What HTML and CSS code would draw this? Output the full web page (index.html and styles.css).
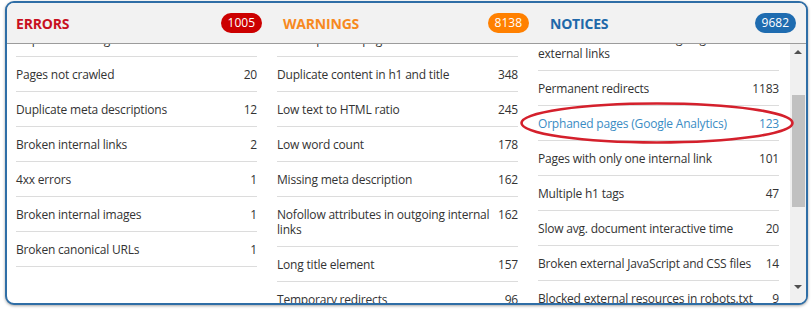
FILE: index.html
```html
<!DOCTYPE html>
<html lang="en">
<head>
<meta charset="utf-8">
<title>Site Audit issues</title>
<link rel="stylesheet" href="styles.css">
</head>
<body>
<div class="popup">
  <div class="head">
    <div class="head-sec">
      <span class="title title--err">ERRORS</span>
      <span class="badge badge--err">1005</span>
    </div>
    <div class="head-sec">
      <span class="title title--warn">WARNINGS</span>
      <span class="badge badge--warn">8138</span>
    </div>
    <div class="head-sec">
      <span class="title title--note">NOTICES</span>
      <span class="badge badge--note">9682</span>
    </div>
  </div>
  <div class="body">
    <div class="cols">
      <ul class="col col--a">
        <li class="row"><span class="lbl">Duplicate title tag</span><span class="num">64</span></li>
        <li class="row"><span class="lbl">Pages not crawled</span><span class="num">20</span></li>
        <li class="row"><span class="lbl">Duplicate meta descriptions</span><span class="num">12</span></li>
        <li class="row"><span class="lbl">Broken internal links</span><span class="num">2</span></li>
        <li class="row"><span class="lbl">4xx errors</span><span class="num">1</span></li>
        <li class="row"><span class="lbl">Broken internal images</span><span class="num">1</span></li>
        <li class="row"><span class="lbl">Broken canonical URLs</span><span class="num">1</span></li>
      </ul>
      <ul class="col col--b">
        <li class="row"><span class="lbl">Uncompressed pages</span><span class="num">512</span></li>
        <li class="row"><span class="lbl">Duplicate content in h1 and title</span><span class="num">348</span></li>
        <li class="row"><span class="lbl">Low text to HTML ratio</span><span class="num">245</span></li>
        <li class="row"><span class="lbl">Low word count</span><span class="num">178</span></li>
        <li class="row"><span class="lbl">Missing meta description</span><span class="num">162</span></li>
        <li class="row"><span class="lbl">Nofollow attributes in outgoing internal links</span><span class="num">162</span></li>
        <li class="row"><span class="lbl">Long title element</span><span class="num">157</span></li>
        <li class="row"><span class="lbl">Temporary redirects</span><span class="num">96</span></li>
      </ul>
      <ul class="col col--c">
        <li class="row"><span class="lbl">Nofollow attributes in outgoing external links</span><span class="num">2041</span></li>
        <li class="row"><span class="lbl">Permanent redirects</span><span class="num">1183</span></li>
        <li class="row row--hl"><span class="lbl">Orphaned pages (Google Analytics)</span><span class="num">123</span></li>
        <li class="row"><span class="lbl">Pages with only one internal link</span><span class="num">101</span></li>
        <li class="row"><span class="lbl">Multiple h1 tags</span><span class="num">47</span></li>
        <li class="row"><span class="lbl">Slow avg. document interactive time</span><span class="num">20</span></li>
        <li class="row"><span class="lbl">Broken external JavaScript and CSS files</span><span class="num">14</span></li>
        <li class="row"><span class="lbl">Blocked external resources in robots.txt</span><span class="num">9</span></li>
      </ul>
    </div>
    <div class="sbar">
      <span class="arrow arrow--up"></span>
      <span class="thumb"></span>
      <span class="arrow arrow--down"></span>
    </div>
  </div>
  <svg class="ring" width="276" height="46" viewBox="0 0 276 46" aria-hidden="true">
    <ellipse cx="138" cy="23" rx="135.5" ry="19.5" fill="none" stroke="#d4202c" stroke-width="2.6"/>
  </svg>
</div>
</body>
</html>
```

FILE: styles.css
```css
* { box-sizing: border-box; }

html, body {
  margin: 0;
  padding: 0;
  background: #ffffff;
}

body {
  font-family: "Open Sans", "Noto Sans", sans-serif;
  font-size: 12px;
  color: #333333;
  width: 811px;
  height: 309px;
  overflow: hidden;
}

.popup {
  position: relative;
  margin: 1px 0 0 5px;
  width: 803px;
  height: 304px;
  border: 2px solid #2f6ea6;
  border-radius: 9px;
  background: #ffffff;
  overflow: hidden;
  box-shadow: 0 1px 3px rgba(0, 0, 0, 0.35);
  display: flex;
  flex-direction: column;
}

.head {
  flex: 0 0 41px;
  display: flex;
  gap: 21px;
  padding-left: 9px;
  background: #f2f2f2;
  border-bottom: 1px solid #9c9c9c;
}

.head-sec {
  width: 246px;
  display: flex;
  align-items: center;
  justify-content: space-between;
}

.title {
  font-weight: 700;
  font-size: 14px;
  letter-spacing: -0.2px;
}

.title--err { color: #c8101f; }
.title--warn { color: #f7891f; }
.title--note { color: #2068a9; }

.badge {
  height: 20px;
  line-height: 20px;
  padding: 0 7px;
  border-radius: 10px;
  color: #ffffff;
  font-size: 12px;
}

.badge--err { background: #cc0000; }
.badge--warn { background: #ff8000; }
.badge--note { background: #1f6cb0; }

.body {
  flex: 1;
  display: flex;
  overflow: hidden;
}

.cols {
  display: flex;
  gap: 20px;
  padding-left: 9px;
}

.col {
  list-style: none;
  margin: 0;
  padding: 0;
  width: 241px;
}

.col--a, .col--b { margin-top: -22px; }
.col--c { margin-top: -23px; }

.row {
  display: flex;
  align-items: flex-start;
  justify-content: space-between;
  padding: 10px 0 9px;
  line-height: 15px;
  letter-spacing: -0.2px;
  border-bottom: 1px solid #dcdcdc;
}

.num {
  margin-left: 4px;
  white-space: nowrap;
}

.row--hl { color: #3a8cc4; }

.sbar {
  margin-left: auto;
  width: 16px;
  background: #f0f0f0;
  display: flex;
  flex-direction: column;
  align-items: center;
  padding: 6px 0 14px;
}

.arrow {
  width: 0;
  height: 0;
  border-left: 4px solid transparent;
  border-right: 4px solid transparent;
}

.arrow--up { border-bottom: 4px solid #505050; }
.arrow--down { border-top: 4px solid #505050; margin-top: auto; }

.thumb {
  width: 13px;
  height: 112px;
  margin-top: 41px;
  background: #c1c1c1;
}

.ring {
  position: absolute;
  left: 512px;
  top: 97px;
}
```
